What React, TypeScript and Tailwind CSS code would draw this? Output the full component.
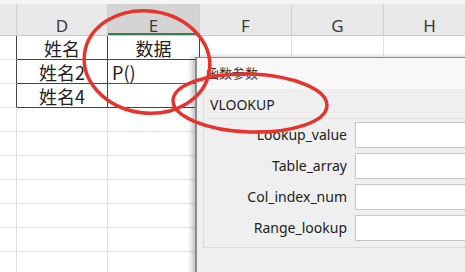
const cols = [
  { key: "C", label: "", w: "w-[17px]" },
  { key: "D", label: "D", w: "w-[91px]" },
  { key: "E", label: "E", w: "w-[92px]" },
  { key: "F", label: "F", w: "w-[92px]" },
  { key: "G", label: "G", w: "w-[92px]" },
  { key: "H", label: "H", w: "w-[92px]" },
];

const params = ["Lookup_value", "Table_array", "Col_index_num", "Range_lookup"];

export default function App() {
  return (
    <div
      className="relative w-[465px] h-[272px] overflow-hidden bg-white text-[#222]"
      style={{ fontFamily: '"Noto Sans", "Noto Sans CJK SC", sans-serif' }}
    >
      {/* top strip */}
      <div className="h-[4px] bg-[#f6f6f6]" />

      {/* column headers */}
      <div className="flex h-[32px] bg-[#e9e9e9] border-b border-[#c9c9c9]">
        {cols.map((c) => (
          <div
            key={c.key}
            className={`${c.w} shrink-0 flex justify-center pt-[14px] border-r border-[#d0d0d0] text-[17px] leading-[16px] text-[#3a3a3a] ${
              c.key === "E" ? "bg-[#d4d4d4] border-b-2 border-b-[#3d7a50]" : ""
            }`}
          >
            {c.label}
          </div>
        ))}
      </div>

      {/* sheet body */}
      <div className="flex flex-col">
        <SheetRow d="姓名" e="数据" />
        <SheetRow d="姓名2" e="P()" active />
        <SheetRow d="姓名4" e="" />
        {Array.from({ length: 7 }).map((_, i) => (
          <SheetRow key={i} d="" e="" plain />
        ))}
      </div>

      {/* function arguments dialog */}
      <div className="absolute left-[195px] top-[57px] w-[290px] h-[230px] bg-[#f0f0f0] border-l-2 border-t border-[#8c8c8c] shadow-[-3px_0_5px_rgba(0,0,0,0.25)]">
        <div className="h-[31px] bg-[#f8f8f8] flex items-center pl-[9px] pt-[1px] text-[13px] text-[#333]">
          函数参数
        </div>
        <div className="pl-[6px]">
          <div className="border-l border-b border-[#dcdcdc] bg-[#efefef]">
            <div className="h-[30px] flex items-center pl-[6px] pt-[2px] text-[14px] text-[#222] border-b border-[#e4e4e4]">
              VLOOKUP
            </div>
            <div className="flex flex-col gap-[5px] pt-[3px] pb-[6px]">
              {params.map((p) => (
                <div key={p} className="flex items-center h-[26px]">
                  <div className="w-[143px] shrink-0 text-right text-[14px] text-[#222] leading-none">
                    {p}
                  </div>
                  <div className="ml-[8px] flex-1 h-[26px] bg-white border border-[#c6c6c6]" />
                </div>
              ))}
            </div>
          </div>
        </div>
      </div>

      {/* red hand-drawn circles */}
      <svg
        className="absolute inset-0 pointer-events-none"
        width="465"
        height="272"
        viewBox="0 0 465 272"
      >
        <ellipse
          cx="147"
          cy="62"
          rx="63"
          ry="51"
          transform="rotate(8 147 62)"
          fill="none"
          stroke="#e8322c"
          strokeWidth="3.5"
        />
        <ellipse
          cx="250"
          cy="103"
          rx="77"
          ry="29"
          transform="rotate(2 250 103)"
          fill="none"
          stroke="#e8322c"
          strokeWidth="3.5"
        />
      </svg>
    </div>
  );
}

function SheetRow({
  d,
  e,
  active,
  plain,
}: {
  d: string;
  e: string;
  active?: boolean;
  plain?: boolean;
}) {
  const line = plain ? "border-[#e0e0e0]" : "border-[#444]";
  return (
    <div className="flex h-[24px]">
      <div
        className={`w-[17px] shrink-0 border-b border-[#e0e0e0] border-r ${
          plain ? "border-r-[#e0e0e0]" : "border-r-[#444]"
        }`}
      />
      <div
        className={`w-[91px] shrink-0 border-r border-b ${line} flex items-end justify-center text-[18px] leading-[22px]`}
        style={{ fontFamily: '"Noto Sans CJK SC", sans-serif' }}
      >
        {d}
      </div>
      <div
        className={`w-[92px] shrink-0 border-r border-b flex items-end text-[18px] leading-[22px] ${
          active ? "border-[#2f6e45] pl-[4px] justify-start" : `${line} justify-center`
        }`}
        style={{ fontFamily: '"Noto Sans CJK SC", sans-serif' }}
      >
        {e}
      </div>
      {["F", "G", "H"].map((k) => (
        <div key={k} className="w-[92px] shrink-0 border-r border-b border-[#e0e0e0]" />
      ))}
    </div>
  );
}
